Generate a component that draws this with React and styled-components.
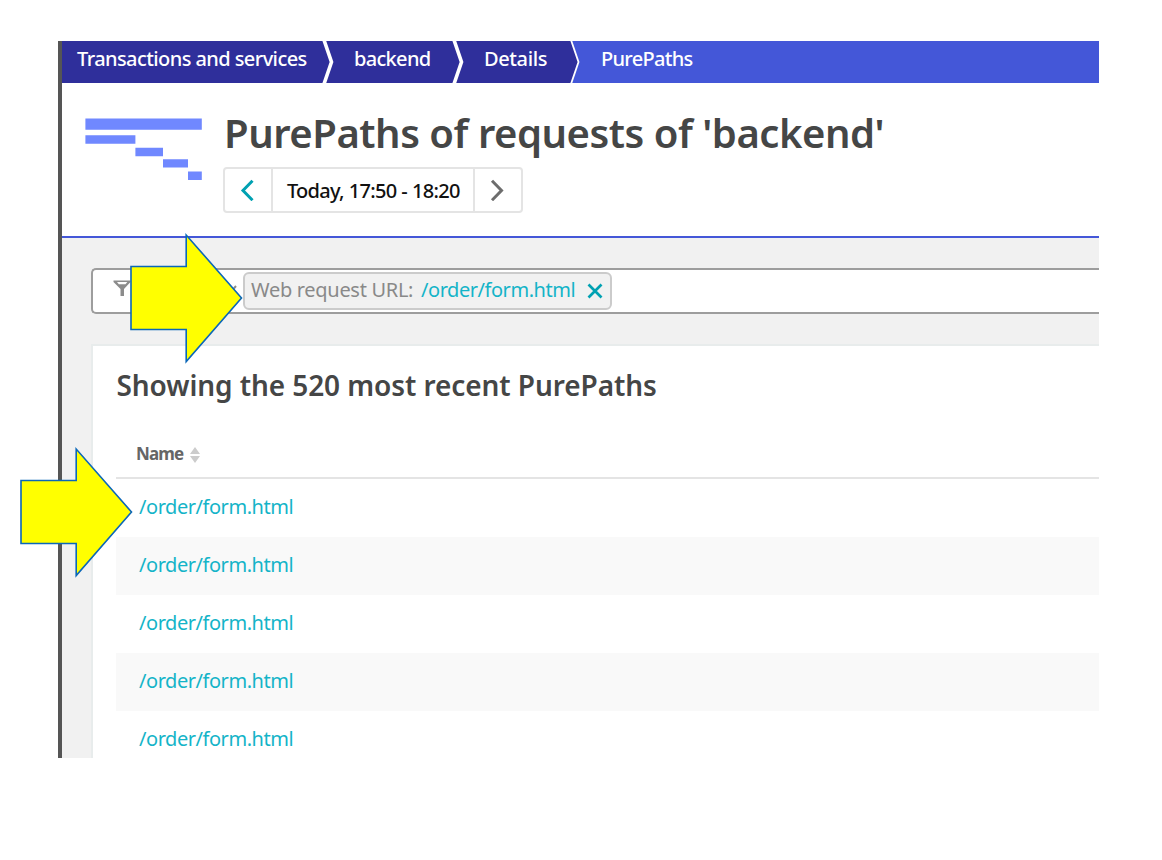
import React from "react";
import styled, { createGlobalStyle } from "styled-components";

const GlobalStyle = createGlobalStyle`
  * { box-sizing: border-box; }
  body { margin: 0; background: #fff; font-family: "Noto Sans", sans-serif; }
`;

const Page = styled.main`
  position: relative;
  width: 1162px;
  height: 860px;
  padding: 41px 63px 0 58px;
  overflow: hidden;
`;

const Screen = styled.div`
  width: 1041px;
  height: 717px;
  overflow: hidden;
  border-left: 4px solid #555;
  background: #f1f1f1;
`;

const Breadcrumbs = styled.nav`
  display: flex;
  height: 42px;
  background: #4457d8;
`;

const Crumb = styled.a`
  display: flex;
  align-items: flex-start;
  flex: none;
  width: ${(p) => p.$width}px;
  padding-left: ${(p) => p.$pad}px;
  background: ${(p) => (p.$current ? "transparent" : "#2f2f9b")};
  color: #fff;
  font-size: 20px;
  font-weight: 500;
  line-height: 36px;
  letter-spacing: ${(p) => p.$spacing || 0}px;
  white-space: nowrap;
`;

const Divider = styled.svg`
  flex: none;
  display: block;
  width: 12px;
  height: 42px;
`;

const Header = styled.header`
  display: flex;
  height: 155px;
  padding: 0 0 0 23px;
  background: #fff;
  border-bottom: 2px solid #4457d8;
`;

const Logo = styled.svg`
  flex: none;
  width: 117px;
  height: 63px;
  margin-top: 35px;
`;

const HeaderText = styled.div`
  padding: 22px 0 0 22px;
`;

const Title = styled.h1`
  margin: 0;
  height: 62px;
  line-height: 56px;
  font-size: 40px;
  font-weight: 600;
  letter-spacing: -0.46px;
  color: #454646;
  white-space: nowrap;
`;

const TimeFrame = styled.div`
  display: flex;
  width: 300px;
  height: 46px;
  margin-left: -1px;
  border: 2px solid #e4e4e4;
  border-radius: 4px;
`;

const StepButton = styled.button`
  display: flex;
  align-items: center;
  justify-content: center;
  flex: none;
  width: 46px;
  padding: 0 2px 0 0;
  border: 0;
  background: none;
`;

const TimeLabel = styled.span`
  flex: 1;
  border: solid #e4e4e4;
  border-width: 0 2px;
  padding-left: 14px;
  font-size: 20px;
  font-weight: 500;
  line-height: 43px;
  letter-spacing: -0.72px;
  word-spacing: 0.5px;
  color: #111;
  white-space: nowrap;
`;

const Content = styled.section`
  padding: 29.5px 0 0 29px;
`;

const FilterBar = styled.div`
  display: flex;
  height: 46.5px;
  padding: 2.5px 0 0 20px;
  background: #fff;
  border: 2px solid #9d9d9d;
  border-right: 0;
  border-radius: 5px 0 0 5px;
`;

const FilterIcon = styled.svg`
  flex: none;
  width: 18px;
  height: 18px;
  margin-top: 8px;
`;

const FilterChevron = styled.svg`
  flex: none;
  width: 14px;
  height: 10px;
  margin: 13px 6px 0 92px;
`;

const Chip = styled.div`
  display: flex;
  width: 369px;
  height: 38px;
  padding-left: 6px;
  border: 2px solid #cbcbcb;
  border-radius: 6px;
  background: #f1f1f1;
  font-size: 20px;
  line-height: 32px;
  white-space: nowrap;
`;

const ChipLabel = styled.span`
  width: 170px;
  color: #898989;
  letter-spacing: -0.3px;
`;

const ChipValue = styled.span`
  width: 166px;
  color: #14b4c8;
  letter-spacing: -0.45px;
`;

const CloseIcon = styled.svg`
  width: 16px;
  height: 16px;
  margin-top: 9px;
`;

const Panel = styled.section`
  height: 440px;
  margin-top: 30px;
  padding: 21px 0 0 23px;
  background: #fff;
  border: solid #e8ecec;
  border-width: 2px 0 0 2px;
`;

const PanelTitle = styled.h2`
  margin: 0;
  height: 63px;
  padding-left: 0.5px;
  line-height: 36px;
  font-size: 28px;
  font-weight: 600;
  letter-spacing: -0.08px;
  color: #454646;
  white-space: nowrap;
`;

const TableHead = styled.div`
  display: flex;
  height: 49px;
  padding-left: 20px;
  border-bottom: 2px solid #e4e4e4;
  font-size: 17px;
  font-weight: 700;
  letter-spacing: -0.9px;
  line-height: 48px;
  color: #666;
`;

const SortIcon = styled.svg`
  width: 10px;
  height: 16px;
  margin: 17px 0 0 7px;
`;

const Row = styled.div`
  height: 58px;
  padding-left: 23px;
  background: ${(p) => (p.$striped ? "#f9f9f9" : "#fff")};
  font-size: 20px;
  line-height: 56px;
  letter-spacing: -0.45px;
  color: #14b4c8;
`;

const Arrow = styled.svg`
  position: absolute;
  left: ${(p) => p.$x}px;
  top: ${(p) => p.$y}px;
  width: 114px;
  height: 132px;
`;

const rows = Array.from({ length: 5 }, () => "/order/form.html");

const CrumbDivider = ({ right, weight }) => (
  <Divider viewBox="0 0 12 42">
    <path d="M0 0H3L10 21L3 42H0Z" fill="#2f2f9b" />
    <path d="M3 0L10 21L3 42H12V0Z" fill={right} />
    <path d="M2 -1L9.5 21L2 43" fill="none" stroke="#fff" strokeWidth={weight} />
  </Divider>
);

const Callout = ({ x, y }) => (
  <Arrow $x={x} $y={y} viewBox="0 0 114 132">
    <path d="M2 34.500H57.200V3L112.500 66L57.200 129.500V97.500H2Z" fill="#ff0" stroke="#0b67b8" strokeWidth="1.6" />
  </Arrow>
);

export default function App() {
  return (
    <Page>
      <GlobalStyle />
      <Screen>
        <Breadcrumbs>
          <Crumb $width={260} $pad={15} $spacing={-0.58}>Transactions and services</Crumb>
          <CrumbDivider right="#2f2f9b" weight={3.6} />
          <Crumb $width={118} $pad={20} $spacing={-0.68}>backend</Crumb>
          <CrumbDivider right="#2f2f9b" weight={3.6} />
          <Crumb $width={105} $pad={20} $spacing={-0.38}>Details</Crumb>
          <CrumbDivider right="#4457d8" weight={1.8} />
          <Crumb $width={200} $pad={20} $spacing={-0.7} $current>PurePaths</Crumb>
        </Breadcrumbs>
        <Header>
          <Logo viewBox="0 0 117 63" fill="#7088ff">
            <path d="M.4 .5H116.800V11.700H.4ZM.4 17.300H50.400V25.800H.4ZM50.400 29.800H78V38.200H50.400ZM78 41.200H103V49.500H78ZM103 53.500H116.800V62H103Z" />
          </Logo>
          <HeaderText>
            <Title>PurePaths of requests of 'backend'</Title>
            <TimeFrame>
              <StepButton aria-label="Previous">
                <svg width="14" height="22" viewBox="0 0 14 22" fill="none" stroke="#00a1b2" strokeWidth="3">
                  <path d="M12.500 1.800L3 11.500L12.500 21.200" />
                </svg>
              </StepButton>
              <TimeLabel>Today, 17:50 - 18:20</TimeLabel>
              <StepButton aria-label="Next">
                <svg width="14" height="22" viewBox="0 0 14 22" fill="none" stroke="#6d6d6d" strokeWidth="3">
                  <path d="M2 1.800L11.500 11.500L2 21.200" />
                </svg>
              </StepButton>
            </TimeFrame>
          </HeaderText>
        </Header>
        <Content>
          <FilterBar>
            <FilterIcon viewBox="0 0 18 18">
              <path d="M.5 .5H17.500V2L11 9V16H7.500V9L.5 2Z" fill="#8c8c8c" />
              <path d="M4 2H14.300L12.500 4.300H5.800Z" fill="#fff" />
            </FilterIcon>
            <FilterChevron viewBox="0 0 14 10">
              <path d="M1 1L7 8L13 1" fill="none" stroke="#8c8c8c" strokeWidth="2" />
            </FilterChevron>
            <Chip>
              <ChipLabel>Web request URL:</ChipLabel>
              <ChipValue>/order/form.html</ChipValue>
              <CloseIcon viewBox="0 0 16 16">
                <path d="M1.500 1.500L14.500 14.500M14.500 1.500L1.500 14.500" stroke="#00a1b2" strokeWidth="2.700" />
              </CloseIcon>
            </Chip>
          </FilterBar>
          <Panel>
            <PanelTitle>Showing the 520 most recent PurePaths</PanelTitle>
            <TableHead>
              Name
              <SortIcon viewBox="0 0 10 16" fill="#ccc">
                <path d="M0 7L5 0L10 7ZM0 9H10L5 16Z" />
              </SortIcon>
            </TableHead>
            {rows.map((name, i) => (
              <Row key={i} $striped={i % 2 === 1}>{name}</Row>
            ))}
          </Panel>
        </Content>
      </Screen>
      <Callout x={129} y={232} />
      <Callout x={19} y={446} />
    </Page>
  );
}
